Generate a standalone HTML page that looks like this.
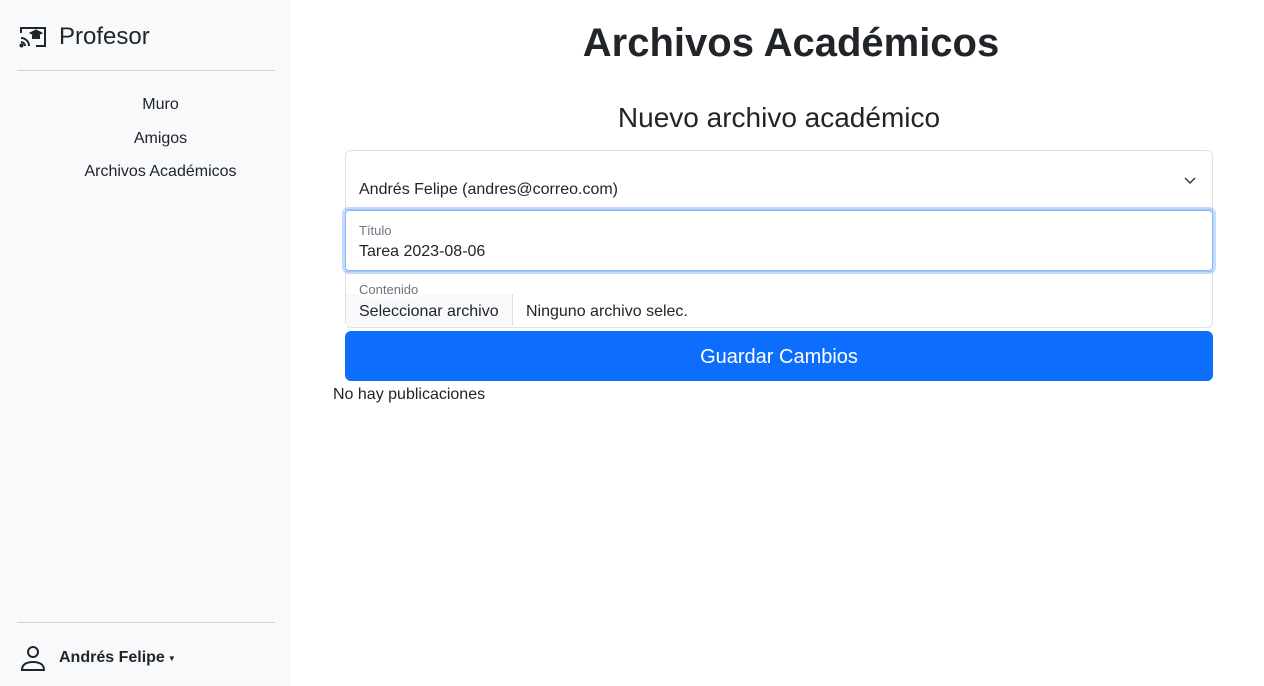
<!DOCTYPE html>
<html><head><meta charset="utf-8"><style>
*{box-sizing:border-box;margin:0;padding:0}
body{width:1264px;height:686px;font-family:"Liberation Sans",sans-serif;color:#212529;background:#fff;position:relative;overflow:hidden}
.side{position:absolute;left:0;top:0;width:291px;height:686px;background:#f8f9fa}
.brand{position:absolute;left:19px;top:23px;display:flex;align-items:center;font-size:24px}
.brand svg{margin-right:12px}
.hr{position:absolute;left:17px;width:258px;height:1px;background:#cfd1d3}
.nav{position:absolute;left:0;width:321px;text-align:center;font-size:16px}
.user{position:absolute;left:19px;top:644px;display:flex;align-items:center;font-weight:bold;font-size:16px}
h1{position:absolute;left:291px;width:1000px;text-align:center;top:21px;font-size:40px;font-weight:bold}
h2{position:absolute;left:345px;width:868px;text-align:center;top:102px;font-size:28px;font-weight:normal}
.f{position:absolute;left:345px;width:868px;border:1px solid #dee2e6;background:#fff}
.lab{position:absolute;left:13px;font-size:13px;color:#6c757d;z-index:3}
.btn{position:absolute;left:345px;top:331px;width:868px;height:50px;background:#0d6efd;border-radius:6px;color:#fff;font-size:20px;text-align:center;line-height:52px}
</style></head><body>
<div class="side">
 <div class="brand"><svg width="28" height="24" viewBox="0 0 28 24" fill="none" stroke="#212529" stroke-width="2"><path d="M2 8V3h24v18h-9"/><path d="M2 13a8 8 0 0 1 8 8M2 17a4 4 0 0 1 4 4"/><circle cx="2.5" cy="20.5" r="1" fill="#212529"/><path d="M12 8l5-2.5 5 2.5-5 2.5z" fill="#212529"/><path d="M14 10v3h6v-3" fill="#212529"/></svg>Profesor</div>
 <div class="hr" style="top:70px"></div>
 <div class="nav" style="top:96px">Muro</div>
 <div class="nav" style="top:130px">Amigos</div>
 <div class="nav" style="top:163px">Archivos Académicos</div>
 <div class="hr" style="top:622px"></div>
 <div class="user"><svg width="28" height="28" viewBox="0 0 28 28" fill="none" stroke="#212529" stroke-width="2"><circle cx="14" cy="8" r="5"/><path d="M3 26c0-6 5-8 11-8s11 2 11 8z"/></svg><span style="margin-left:12px">Andrés Felipe</span><span style="font-size:8px;margin-left:3px">▼</span></div>
</div>
<h1>Archivos Académicos</h1>
<h2>Nuevo archivo académico</h2>
<div class="f" style="top:150px;height:60px;border-radius:6px 6px 0 0"><div style="position:absolute;left:13px;top:30px;font-size:16px">Andrés Felipe (andres@correo.com)</div><svg style="position:absolute;right:15px;top:24px" width="14" height="10" viewBox="0 0 14 10" fill="none" stroke="#343a40" stroke-width="1.5"><path d="M2 3l5 5 5-5"/></svg></div>
<div class="f" style="top:210px;height:61px;border-color:#86b7fe;box-shadow:0 0 0 3px rgba(13,110,253,.25);border-radius:4px;z-index:2"><div class="lab" style="top:12px">Título</div><div style="position:absolute;left:13px;top:32px;font-size:16px">Tarea 2023-08-06</div></div>
<div class="f" style="top:271px;height:57px;border-radius:0 0 6px 6px"><div style="position:absolute;left:0;top:22px;width:167px;height:32px;background:#f8f9fa;border-right:1px solid #dee2e6;font-size:16px;padding:9px 0 0 13px">Seleccionar archivo</div><div class="lab" style="top:11px;background:#fff;padding-right:4px;line-height:14px">Contenido</div><div style="position:absolute;left:180px;top:31px;font-size:16px">Ninguno archivo selec.</div></div>
<div class="btn">Guardar Cambios</div>
<div style="position:absolute;left:333px;top:386px;font-size:16px">No hay publicaciones</div>
</body></html>
